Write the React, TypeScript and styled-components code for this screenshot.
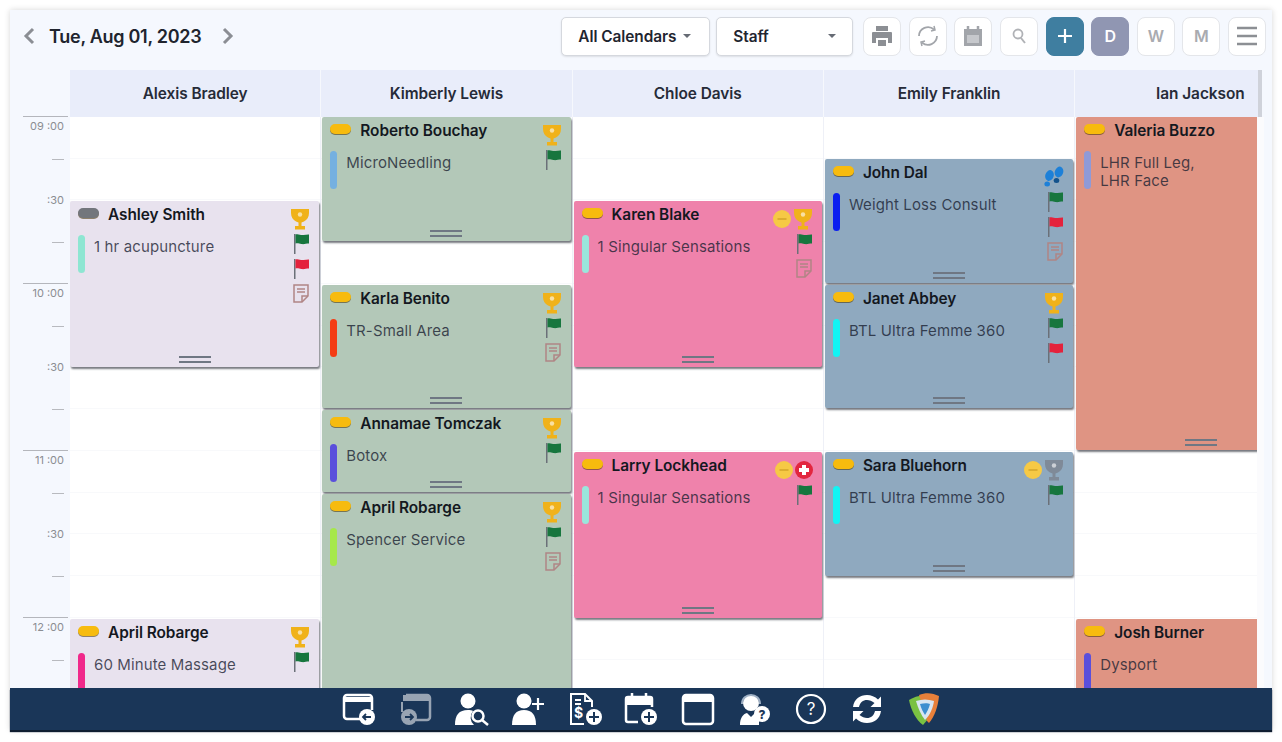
import React from "react";
import styled, { createGlobalStyle } from "styled-components";

const Global = createGlobalStyle`
  html, body { margin: 0; padding: 0; background: #fff; }
  body { font-family: Inter, "Noto Sans", sans-serif; color: #1c2230; }
  * { box-sizing: border-box; }
`;

const HOUR = 167;
const COL = 251.3;

const Page = styled.div`
  width: 1282px;
  height: 742px;
  padding: 10px;
  overflow: hidden;
`;
const Frame = styled.div`
  width: 1262px;
  height: 720px;
  background: #f5f8fe;
  box-shadow: 0 0 6px rgba(0, 0, 0, 0.16);
  display: flex;
  flex-direction: column;
`;
const Toolbar = styled.header`
  height: 60px;
  flex: none;
  display: flex;
  align-items: center;
  padding: 0 6px 8px 12px;
`;
const DateNav = styled.div`
  display: flex;
  align-items: center;
  flex: 1;
`;
const Chevron = styled.svg`
  width: 14px;
  height: 18px;
  fill: none;
  stroke: #8b8e94;
  stroke-width: 3;
`;
const DateLabel = styled.div`
  font-size: 18px;
  font-weight: 600;
  margin: 0 20px 0 13px;
  letter-spacing: -0.28px;
  color: #20242e;
`;
const Select = styled.div<{ $w: number; $gap: number }>`
  width: ${(p) => p.$w}px;
  height: 39px;
  margin-right: ${(p) => p.$gap}px;
  background: #fff;
  border: 1px solid #d5d8de;
  border-radius: 5px;
  display: flex;
  align-items: center;
  padding: 0 16px;
  font-size: 15.4px;
  font-weight: 600;
  letter-spacing: -0.05px;
  color: #1f2530;
  box-shadow: 0 1px 2px rgba(0, 0, 0, 0.1);
`;
const Caret = styled.span<{ $push?: boolean }>`
  margin-left: ${(p) => (p.$push ? "auto" : "7px")};
  width: 0;
  height: 0;
  border-left: 4px solid transparent;
  border-right: 4px solid transparent;
  border-top: 4px solid #666b74;
`;
const ToolGroup = styled.div`
  display: flex;
  gap: 7.6px;
`;
const ToolBtn = styled.div<{ $bg?: string }>`
  width: 38px;
  height: 39px;
  border-radius: 8px;
  background: ${(p) => p.$bg || "#fff"};
  border: 1px solid ${(p) => p.$bg || "#e4e6ea"};
  color: ${(p) => (p.$bg ? "#fff" : "#a9abb0")};
  font-size: 16px;
  font-weight: 600;
  display: flex;
  align-items: center;
  justify-content: center;
`;
const Calendar = styled.div`
  flex: 1;
  min-height: 0;
  display: flex;
  padding-right: 8px;
  overflow: hidden;
`;
const Gutter = styled.div`
  width: 60px;
  flex: none;
  display: flex;
  flex-direction: column;
  padding-top: 47px;
  overflow: hidden;
`;
const Slot = styled.div<{ $kind: "hour" | "half" | "tick" }>`
  height: ${HOUR / 4}px;
  flex: none;
  margin-left: 13px;
  margin-right: 2px;
  box-shadow: ${(p) => (p.$kind === "hour" ? "0 -1px 0 #b4b6bc" : "none")};
  text-align: right;
  padding: ${(p) => (p.$kind === "hour" ? "2px" : "0")} 4px 0 0;
  font-size: 11px;
  color: #8b8d92;
`;
const HalfLabel = styled.span`
  display: block;
  transform: translateY(-8px);
`;
const Tick = styled.div`
  width: 12px;
  height: 1px;
  background: #b8babf;
  margin: 0 0 0 auto;
`;
const Scroller = styled.div`
  flex: 1;
  min-width: 0;
  overflow: hidden;
  display: flex;
`;
const Column = styled.section`
  width: ${COL}px;
  flex: none;
  display: flex;
  flex-direction: column;
`;
const ColHead = styled.div`
  height: 47px;
  flex: none;
  background: #e9edfa;
  border-right: 1px solid #f6f8fd;
  display: flex;
  align-items: center;
  justify-content: center;
  font-size: 15.4px;
  font-weight: 600;
  letter-spacing: -0.05px;
  color: #262b38;
`;
const ColBody = styled.div`
  position: relative;
  flex: 1;
  background: #fff;
  border-right: 1px solid #eef0f7;
  background-image: repeating-linear-gradient(
    to bottom,
    transparent 0,
    transparent ${HOUR / 4 - 1}px,
    #f8f9fb ${HOUR / 4 - 1}px,
    #f8f9fb ${HOUR / 4}px
  );
`;
const Rail = styled.div`
  width: 7px;
  flex: none;
  display: flex;
  flex-direction: column;
`;
const RailHead = styled.div`
  height: 47px;
  background: linear-gradient(to right, #e9edfa 0, #e9edfa 1px, #cfd2da 1px, #cfd2da 5px, #f5f8fe 5px);
`;
const RailBody = styled.div`
  flex: 1;
  background: #fbfbfd;
`;
const Card = styled.article<{ $top: number; $h: number; $bg: string; $narrow?: boolean; $flush?: boolean }>`
  position: absolute;
  left: ${(p) => (p.$flush ? "0" : "1px")};
  right: ${(p) => (p.$narrow ? "0" : "1px")};
  top: ${(p) => p.$top}px;
  height: ${(p) => p.$h}px;
  background: ${(p) => p.$bg};
  border-radius: 2px;
  box-shadow: 1px 2px 2px rgba(30, 35, 45, 0.6);
  display: flex;
  padding: 6px 9px 0 8px;
  overflow: hidden;
`;
const CardMain = styled.div`
  flex: 1;
  min-width: 0;
`;
const NameRow = styled.div`
  display: flex;
  align-items: center;
  height: 14px;
`;
const Pill = styled.span<{ $c: string }>`
  width: 21px;
  height: 10px;
  flex: none;
  border-radius: 5px;
  background: ${(p) => p.$c};
  box-shadow: 0 1px 0 rgba(70, 50, 0, 0.55);
  margin: -2px 9px 0 0;
`;
const Name = styled.div`
  font-size: 15.4px;
  font-weight: 600;
  letter-spacing: -0.05px;
  color: #14181f;
  white-space: nowrap;
`;
const ServiceRow = styled.div`
  display: flex;
  margin-top: 14px;
`;
const Stripe = styled.span<{ $c: string }>`
  width: 7px;
  height: 38px;
  flex: none;
  border-radius: 4px;
  background: ${(p) => p.$c};
  margin-right: 9px;
`;
const Service = styled.div`
  font-size: 15px;
  line-height: 18px;
  padding-top: 3px;
  letter-spacing: 0.12px;
  color: rgba(24, 32, 48, 0.78);
`;
const IconStack = styled.div`
  display: flex;
  flex-direction: column;
  align-items: flex-end;
  gap: 4px;
  margin-top: 1px;
`;
const IconRow = styled.div`
  display: flex;
  align-items: center;
  gap: 2px;
  height: 21px;
`;
const Grip = styled.div`
  position: absolute;
  left: 50%;
  bottom: 4px;
  width: 32px;
  height: 7px;
  margin-left: -16px;
  border-top: 2px solid #6f7783;
  border-bottom: 2px solid #6f7783;
`;
const BottomBar = styled.footer`
  height: 42px;
  flex: none;
  background: #1a3658;
  display: flex;
  align-items: center;
  justify-content: center;
  gap: 22.5px;
  box-shadow: 0 2px 1px #0f1d30;
  position: relative;
`;
const BarIcon = styled.svg`
  width: 34px;
  height: 34px;
  flex: none;
`;
const ToolIcon = styled.svg`
  width: 24px;
  height: 24px;
  fill: none;
`;

const Trophy = ({ c = "#f0b21a" }: { c?: string }) => (
  <svg width="20" height="22" viewBox="0 0 20 22">
    <path d="M1 1h18v4c0 4-2 7-5 8.500l-2.500 1V18H15v3.500H5V18h3.500v-3.500l-2.500-1C3 12 1 9 1 5z" fill={c} />
    <circle cx="10" cy="6.500" r="2.200" fill="#fff" opacity=".6" />
  </svg>
);
const Flag = ({ c = "#17763e" }: { c?: string }) => (
  <svg width="18" height="21" viewBox="0 0 18 21">
    <rect x="2" y="1" width="1.500" height="20" fill="#6b7078" />
    <path d="M3.500 1.500c3-1 5 1 8 .5 2-.3 4-.6 5.500-.5v9c-3 0-5 1-7.500.5-2.500-.5-4-1-6-.5z" fill={c} />
  </svg>
);
const Note = () => (
  <svg width="18" height="21" viewBox="0 0 18 21" fill="none" stroke="#b08585" strokeWidth="1.500">
    <path d="M2 2h14v11l-6 6H2z" />
    <path d="M10 19v-6h6M5 6h8M5 9h8" />
  </svg>
);
const Coin = () => (
  <svg width="18" height="18" viewBox="0 0 18 18">
    <circle cx="9" cy="9" r="9" fill="#f6c945" />
    <rect x="4.500" y="8" width="9" height="2" fill="#dcae30" />
  </svg>
);
const Plus = () => (
  <svg width="18" height="18" viewBox="0 0 18 18">
    <circle cx="9" cy="9" r="9" fill="#e2263f" />
    <path d="M7 4h4v3h3v4h-3v3H7v-3H4V7h3z" fill="#fff" />
  </svg>
);
const Feet = () => (
  <svg width="20" height="21" viewBox="0 0 20 21">
    <ellipse cx="5.500" cy="9.500" rx="4.200" ry="5.500" transform="rotate(18 5.500 9.500)" fill="#1d80d8" />
    <ellipse cx="3.200" cy="18" rx="2.800" ry="2.500" fill="#1d80d8" />
    <ellipse cx="15" cy="6" rx="4.200" ry="5.500" transform="rotate(18 15 6)" fill="#1d80d8" />
    <ellipse cx="12.500" cy="14.500" rx="2.800" ry="2.500" fill="#13528c" />
  </svg>
);

type Ev = {
  top: number;
  h: number;
  bg: string;
  pill?: string;
  name: string;
  service: string[];
  stripe: string;
  top1?: React.ReactNode;
  rows?: React.ReactNode[];
  narrow?: boolean;
  flush?: boolean;
  grip?: boolean;
};

const LAV = "#e8e2ee";
const GRN = "#b3c8b8";
const PNK = "#ef82ab";
const BLU = "#8fa9bf";
const SAL = "#df9483";
const Y = "#f7bb0e";

const columns: { name: string; events: Ev[] }[] = [
  {
    name: "Alexis Bradley",
    events: [
      { top: 84, h: 166, bg: LAV, pill: "#73767c", name: "Ashley Smith", service: ["1 hr acupuncture"], stripe: "#8ee6d2", top1: <Trophy />, rows: [<Flag />, <Flag c="#e4223c" />, <Note />], grip: true, flush: true },
      { top: 502, h: 120, bg: LAV, name: "April Robarge", service: ["60 Minute Massage"], stripe: "#f0288a", top1: <Trophy />, rows: [<Flag />], flush: true },
    ],
  },
  {
    name: "Kimberly Lewis",
    events: [
      { top: 0, h: 124, bg: GRN, name: "Roberto Bouchay", service: ["MicroNeedling"], stripe: "#75b0e0", top1: <Trophy />, rows: [<Flag />], grip: true },
      { top: 168, h: 123, bg: GRN, name: "Karla Benito", service: ["TR-Small Area"], stripe: "#f43c14", top1: <Trophy />, rows: [<Flag />, <Note />], grip: true },
      { top: 293, h: 82, bg: GRN, name: "Annamae Tomczak", service: ["Botox"], stripe: "#5a4fdc", top1: <Trophy />, rows: [<Flag />], grip: true },
      { top: 377, h: 240, bg: GRN, name: "April Robarge", service: ["Spencer Service"], stripe: "#a6e84a", top1: <Trophy />, rows: [<Flag />, <Note />] },
    ],
  },
  {
    name: "Chloe Davis",
    events: [
      { top: 84, h: 166, bg: PNK, name: "Karen Blake", service: ["1 Singular Sensations"], stripe: "#9ae6dc", top1: <><Coin /><Trophy /></>, rows: [<Flag />, <Note />], grip: true },
      { top: 335, h: 166, bg: PNK, name: "Larry Lockhead", service: ["1 Singular Sensations"], stripe: "#9ae6dc", top1: <><Coin /><Plus /></>, rows: [<Flag />], grip: true },
    ],
  },
  {
    name: "Emily Franklin",
    events: [
      { top: 42, h: 124, bg: BLU, name: "John Dal", service: ["Weight Loss Consult"], stripe: "#0a1ef0", top1: <Feet />, rows: [<Flag />, <Flag c="#e4223c" />, <Note />], grip: true },
      { top: 168, h: 123, bg: BLU, name: "Janet Abbey", service: ["BTL Ultra Femme 360"], stripe: "#12f4f4", top1: <Trophy />, rows: [<Flag />, <Flag c="#e4223c" />], grip: true },
      { top: 335, h: 124, bg: BLU, name: "Sara Bluehorn", service: ["BTL Ultra Femme 360"], stripe: "#12f4f4", top1: <><Coin /><Trophy c="#7f8a98" /></>, rows: [<Flag />], grip: true },
    ],
  },
  {
    name: "Ian Jackson",
    events: [
      { top: 0, h: 333, bg: SAL, name: "Valeria Buzzo", service: ["LHR Full Leg,", "LHR Face"], stripe: "#8f9ad8", grip: true, narrow: true },
      { top: 502, h: 120, bg: SAL, name: "Josh Burner", service: ["Dysport"], stripe: "#5a4fdc", narrow: true },
    ],
  },
];

const EventCard = ({ e }: { e: Ev }) => (
  <Card $top={e.top} $h={e.h} $bg={e.bg} $narrow={e.narrow} $flush={e.flush}>
    <CardMain>
      <NameRow>
        <Pill $c={e.pill || Y} />
        <Name>{e.name}</Name>
      </NameRow>
      <ServiceRow>
        <Stripe $c={e.stripe} />
        <Service>
          {e.service.map((s) => (
            <div key={s}>{s}</div>
          ))}
        </Service>
      </ServiceRow>
    </CardMain>
    <IconStack>
      {e.top1 && <IconRow>{e.top1}</IconRow>}
      {e.rows?.map((r, i) => (
        <IconRow key={i}>{r}</IconRow>
      ))}
    </IconStack>
    {e.grip && <Grip />}
  </Card>
);

const slots: { kind: "hour" | "half" | "tick"; label?: string }[] = [];
["09", "10", "11"].forEach((h) => {
  slots.push({ kind: "hour", label: `${h} :00` }, { kind: "tick" }, { kind: "half", label: ":30" }, { kind: "tick" });
});
slots.push({ kind: "hour", label: "12 :00" }, { kind: "tick" });

const W = "#fff";
const Ink = "#1a3658";

const barIcons = [
  <g key="a">
    <path d="M6 27H5a3 3 0 0 1-3-3V6a3 3 0 0 1 3-3h22a3 3 0 0 1 3 3v12" fill="none" stroke={W} strokeWidth="2.500" />
    <path d="M3 5h26v5H3z" fill={W} />
    <path d="M6 27h12" stroke={W} strokeWidth="2.500" />
    <circle cx="25" cy="25" r="8" fill={W} />
    <path d="M29 25h-8m3-3-3 3 3 3" fill="none" stroke={Ink} strokeWidth="1.800" />
  </g>,
  <g key="b" opacity={0.55}>
    <path d="M8 3h21a3 3 0 0 1 3 3v19a3 3 0 0 1-3 3H18" fill="none" stroke={W} strokeWidth="2.500" />
    <path d="M5 3h26v6H5zM3 10h2v10H3z" fill={W} />
    <circle cx="11" cy="25" r="8" fill={W} />
    <path d="M7 25h8m-3-3 3 3-3 3" fill="none" stroke={Ink} strokeWidth="1.800" />
  </g>,
  <g key="c">
    <circle cx="13" cy="9" r="7.500" fill={W} />
    <path d="M0 33c0-10 4-15 13-15 2 0 4 .4 5 1a10 10 0 0 0 1 14z" fill={W} />
    <circle cx="23" cy="24" r="5.500" fill="none" stroke={W} strokeWidth="2.500" />
    <path d="m27 28 6 5" stroke={W} strokeWidth="2.500" />
  </g>,
  <g key="d">
    <circle cx="13" cy="9" r="7.500" fill={W} />
    <path d="M1 33c0-10 4-15 12-15s12 5 12 15z" fill={W} />
    <path d="M27 6v12M21 12h12" stroke={W} strokeWidth="2.200" />
  </g>,
  <g key="e">
    <path d="M16 32H3V2h14l7 7v6" fill="none" stroke={W} strokeWidth="2" />
    <path d="M17 2v7h7M7 8h6M7 12h6" fill="none" stroke={W} strokeWidth="1.800" />
    <text x="6" y="26" fontSize="14" fontWeight="700" fill={W} fontFamily="Inter, sans-serif">$</text>
    <circle cx="26" cy="25" r="8" fill={W} />
    <path d="M26 20v10M21 25h10" stroke={Ink} strokeWidth="2" />
  </g>,
  <g key="f">
    <path d="M14 30H4a2 2 0 0 1-2-2V7a2 2 0 0 1 2-2h22a2 2 0 0 1 2 2v8" fill="none" stroke={W} strokeWidth="2.500" />
    <path d="M3 6h24v7H3z" fill={W} />
    <path d="M8 1v7M22 1v7" stroke={W} strokeWidth="2.500" />
    <circle cx="25" cy="25" r="8" fill={W} />
    <path d="M25 20v10M20 25h10" stroke={Ink} strokeWidth="2" />
  </g>,
  <g key="g">
    <rect x="2" y="3" width="30" height="29" rx="3" fill="none" stroke={W} strokeWidth="2.500" />
    <path d="M3 4h28v6H3z" fill={W} />
  </g>,
  <g key="h">
    <circle cx="14" cy="11" r="8" fill={W} />
    <path d="M3 33c0-7 3-11 7-12l4 4 4-4c2 .500 3 1.500 4 3v9z" fill={W} />
    <path d="M5 12c0-12 18-12 18 0" fill="none" stroke="#9fb0c4" strokeWidth="2" />
    <circle cx="25" cy="22" r="8" fill={W} />
    <text x="25" y="26.500" textAnchor="middle" fontSize="12" fontWeight="800" fill={Ink} fontFamily="Inter, sans-serif">?</text>
  </g>,
  <g key="i">
    <circle cx="17" cy="17" r="14" fill="none" stroke={W} strokeWidth="2.200" />
    <text x="17" y="23" textAnchor="middle" fontSize="17" fill={W} fontFamily="Inter, sans-serif">?</text>
  </g>,
  <g key="j">
    <path d="M3 15C4 7 10 3 17 3c4 0 8 1.500 11 4.500l3-3V15H20.500l4-4C22 9 19.500 8 17 8c-4 0-7 2.500-8 7z" fill={W} />
    <path d="M31 19c-1 8-7 12-14 12-4 0-8-1.500-11-4.500l-3 3V19h10.500l-4 4c2.500 2 5 3 7.500 3 4 0 7-2.500 8-7z" fill={W} />
  </g>,
  <g key="k">
    <path d="M2 8C8 4 14 3 19 4l3 22-6 7C9 28 4 18 2 8z" fill="#7ac142" />
    <path d="M12 3c7-3 14-2 20 1-1 10-4 20-10 27l-2-2z" fill="#e8803a" />
    <path d="M9 9c6-2 12-2 18 0-1 7-4 14-9 19-4-5-7-12-9-19z" fill="#d8e6f2" />
    <path d="M13 12c4-1 8-1 10 0-1 4-3 8-5 11-2-3-4-7-5-11z" fill="#3d8fd0" />
  </g>,
];

export default function App() {
  return (
    <Page>
      <Global />
      <Frame>
        <Toolbar>
          <DateNav>
            <Chevron viewBox="0 0 14 18"><path d="M11 2 4 9l7 7" /></Chevron>
            <DateLabel>Tue, Aug 01, 2023</DateLabel>
            <Chevron viewBox="0 0 14 18"><path d="m3 2 7 7-7 7" /></Chevron>
          </DateNav>
          <Select $w={149} $gap={6}>All Calendars<Caret /></Select>
          <Select $w={137} $gap={10}>Staff<Caret $push /></Select>
          <ToolGroup>
            <ToolBtn>
              <ToolIcon viewBox="0 0 24 24"><path d="M6 2h12v5H6zM3 8h18a1 1 0 0 1 1 1v10h-4v-5H6v5H2V9a1 1 0 0 1 1-1zM8 16h8v6H8z" fill="#8c8f94" /></ToolIcon>
            </ToolBtn>
            <ToolBtn>
              <ToolIcon viewBox="0 0 24 24"><path d="M3 12a9 9 0 0 1 15-6.500M21 12a9 9 0 0 1-15 6.500" stroke="#a2a5aa" strokeWidth="1.800" /><path d="m18 2 1 4-4 1M6 22l-1-4 4-1" stroke="#a2a5aa" strokeWidth="1.500" /></ToolIcon>
            </ToolBtn>
            <ToolBtn>
              <ToolIcon viewBox="0 0 24 24"><path d="M3 5h18v17H3z" fill="#a2a5aa" /><path d="M7 2v5M17 2v5" stroke="#a2a5aa" strokeWidth="2.500" /><path d="M6 11h12v8H6z" fill="#c6c8cc" /></ToolIcon>
            </ToolBtn>
            <ToolBtn>
              <ToolIcon viewBox="0 0 24 24"><circle cx="11" cy="10" r="4.500" stroke="#b0b2b6" strokeWidth="1.800" /><path d="m14 14 4 5" stroke="#b0b2b6" strokeWidth="2" /></ToolIcon>
            </ToolBtn>
            <ToolBtn $bg="#3f7ea0">
              <ToolIcon viewBox="0 0 24 24"><path d="M12 5v14M5 12h14" stroke="#fff" strokeWidth="2.200" /></ToolIcon>
            </ToolBtn>
            <ToolBtn $bg="#9096b2">D</ToolBtn>
            <ToolBtn>W</ToolBtn>
            <ToolBtn>M</ToolBtn>
            <ToolBtn>
              <ToolIcon viewBox="0 0 24 24"><path d="M2 4h20M2 12h20M2 20h20" stroke="#8c8f94" strokeWidth="2.600" /></ToolIcon>
            </ToolBtn>
          </ToolGroup>
        </Toolbar>
        <Calendar>
          <Gutter>
            {slots.map((s, i) => (
              <Slot key={i} $kind={s.kind}>
                {s.kind === "hour" && s.label}
                {s.kind === "half" && <HalfLabel>{s.label}</HalfLabel>}
                {s.kind === "tick" && <Tick />}
              </Slot>
            ))}
          </Gutter>
          <Scroller>
            {columns.map((c) => (
              <Column key={c.name}>
                <ColHead>{c.name}</ColHead>
                <ColBody>
                  {c.events.map((e) => (
                    <EventCard key={e.name} e={e} />
                  ))}
                </ColBody>
              </Column>
            ))}
          </Scroller>
          <Rail>
            <RailHead />
            <RailBody />
          </Rail>
        </Calendar>
        <BottomBar>
          {barIcons.map((icon, i) => (
            <BarIcon key={i} viewBox="0 0 34 34">{icon}</BarIcon>
          ))}
        </BottomBar>
      </Frame>
    </Page>
  );
}
